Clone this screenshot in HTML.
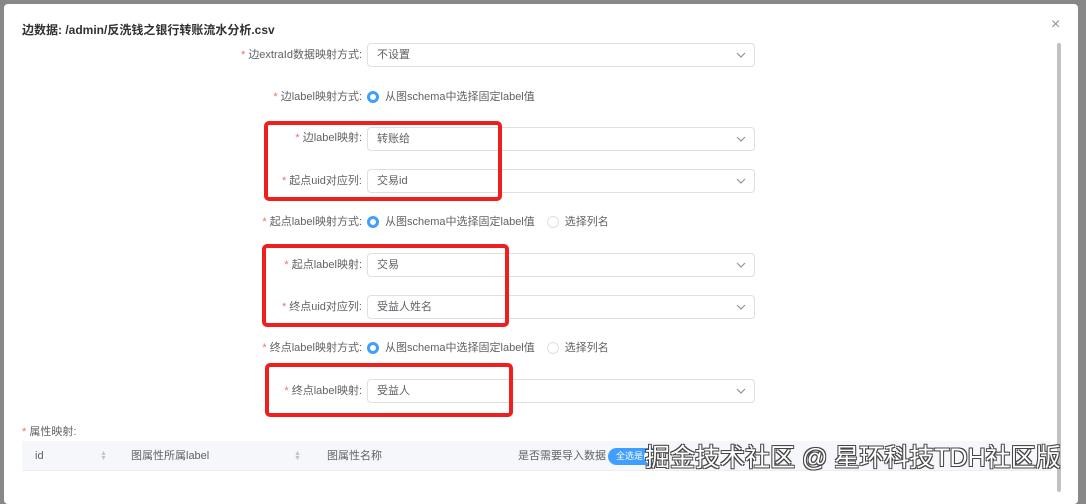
<!DOCTYPE html>
<html><head><meta charset="utf-8"><style>
*{box-sizing:border-box;margin:0;padding:0}
body{width:1086px;height:492px;background:#888;position:relative;overflow:hidden;font-family:"Liberation Sans","Noto Sans CJK SC",sans-serif;font-size:11px;color:#606266}
.modal{position:absolute;left:4px;top:4px;width:1074px;height:500px;background:#fff;border-radius:4px}
.abs{position:absolute}
.title{left:22px;top:21px;font-size:12px;color:#303133;font-weight:bold}
.lbl{position:absolute;right:724px;text-align:right;white-space:nowrap;font-size:11px;line-height:14px;color:#606266}
.lbl b{color:#f56c6c;font-weight:normal;margin-right:3px}
.sel{position:absolute;left:367px;width:388px;height:24px;border:1px solid #dcdfe6;border-radius:4px;padding-left:9px;line-height:22px;color:#606266;font-size:11px}
.sel svg{position:absolute;right:8px;top:8px}
.radio{position:absolute;left:367px;white-space:nowrap;display:flex;align-items:center;line-height:14px}
.r{width:12px;height:12px;border-radius:50%;border:1px solid #dcdfe6;display:inline-block;margin-right:6px}
.r.on{border:3.5px solid #409eff;background:#fff}
.red{position:absolute;border:4px solid #f01f1f;border-radius:5px}
.th{position:absolute;left:22px;top:441px;width:1029px;height:30px;background:#f5f7fa;border-bottom:1px solid #ebeef5}
.th span{position:absolute;top:8px;line-height:14px;color:#606266}
.sort{position:absolute;top:10px;font-size:7px;line-height:5px;color:#c0c4cc}
</style></head><body>
<div class="modal"></div>
<div class="abs title">边数据: /admin/反洗钱之银行转账流水分析.csv</div>
<div class="abs" style="left:1051px;top:16px;font-size:16px;color:#909399">×</div>
<div class="abs" style="left:1057px;top:43px;width:4px;height:449px;background:#c1c1c1;border-radius:2px"></div>

<div class="lbl" style="top:48px"><b>*</b>边extraId数据映射方式:</div>
<div class="sel" style="top:43px">不设置<svg width="10" height="7" viewBox="0 0 10 7"><path d="M1 1l4 4 4-4" fill="none" stroke="#909399" stroke-width="1.2"/></svg></div>

<div class="lbl" style="top:90px"><b>*</b>边label映射方式:</div>
<div class="radio" style="top:90px"><i class="r on"></i>从图schema中选择固定label值</div>

<div class="lbl" style="top:131px"><b>*</b>边label映射:</div>
<div class="sel" style="top:127px">转账给<svg width="10" height="7" viewBox="0 0 10 7"><path d="M1 1l4 4 4-4" fill="none" stroke="#909399" stroke-width="1.2"/></svg></div>
<div class="lbl" style="top:174px"><b>*</b>起点uid对应列:</div>
<div class="sel" style="top:169px">交易id<svg width="10" height="7" viewBox="0 0 10 7"><path d="M1 1l4 4 4-4" fill="none" stroke="#909399" stroke-width="1.2"/></svg></div>

<div class="lbl" style="top:215px"><b>*</b>起点label映射方式:</div>
<div class="radio" style="top:215px"><i class="r on"></i>从图schema中选择固定label值<i class="r" style="margin-left:12px"></i>选择列名</div>

<div class="lbl" style="top:258px"><b>*</b>起点label映射:</div>
<div class="sel" style="top:253px">交易<svg width="10" height="7" viewBox="0 0 10 7"><path d="M1 1l4 4 4-4" fill="none" stroke="#909399" stroke-width="1.2"/></svg></div>
<div class="lbl" style="top:300px"><b>*</b>终点uid对应列:</div>
<div class="sel" style="top:295px">受益人姓名<svg width="10" height="7" viewBox="0 0 10 7"><path d="M1 1l4 4 4-4" fill="none" stroke="#909399" stroke-width="1.2"/></svg></div>

<div class="lbl" style="top:341px"><b>*</b>终点label映射方式:</div>
<div class="radio" style="top:341px"><i class="r on"></i>从图schema中选择固定label值<i class="r" style="margin-left:12px"></i>选择列名</div>

<div class="lbl" style="top:384px"><b>*</b>终点label映射:</div>
<div class="sel" style="top:379px">受益人<svg width="10" height="7" viewBox="0 0 10 7"><path d="M1 1l4 4 4-4" fill="none" stroke="#909399" stroke-width="1.2"/></svg></div>

<div class="red" style="left:264px;top:121px;width:238px;height:80px"></div>
<div class="red" style="left:262px;top:244px;width:247px;height:83px"></div>
<div class="red" style="left:265px;top:363px;width:248px;height:54px"></div>

<div class="abs" style="left:22px;top:423px"><span style="color:#f56c6c">*</span> 属性映射:</div>
<div class="th">
<span style="left:13px">id</span><div class="sort" style="left:78px">▲<br>▼</div>
<span style="left:109px">图属性所属label</span><div class="sort" style="left:272px">▲<br>▼</div>
<span style="left:305px">图属性名称</span>
<span style="left:496px">是否需要导入数据</span>
<div class="abs" style="left:586px;top:7px;width:52px;height:17px;background:#409eff;border-radius:9px;color:#fff;font-size:9px;line-height:17px;padding-left:8px">全选是<div class="abs" style="right:1px;top:1px;width:15px;height:15px;background:#fff;border-radius:50%"></div></div>
</div>
<div class="abs" style="left:645px;top:443px;font-size:25px;line-height:30px;color:#fff;white-space:nowrap;text-shadow:1px 1px 0 #444,-1px -1px 0 #444,1px -1px 0 #444,-1px 1px 0 #444">掘金技术社区 @ 星环科技TDH社区版</div>
</body></html>
